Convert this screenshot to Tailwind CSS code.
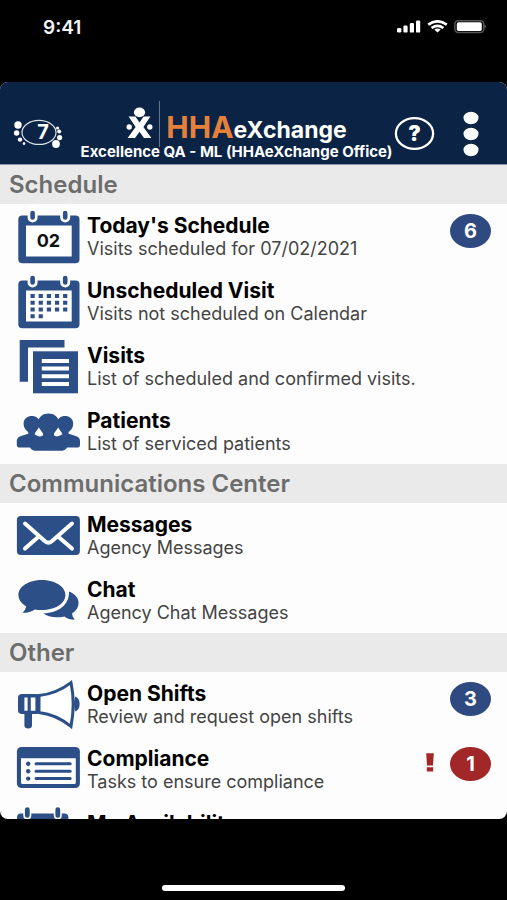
<!DOCTYPE html>
<html lang="en">
<head>
<meta charset="utf-8">
<meta name="viewport" content="width=device-width, initial-scale=1">
<title>HHAeXchange</title>
<script src="https://cdn.jsdelivr.net/npm/@tailwindcss/browser@4"></script>
</head>
<body class="bg-black font-['Inter','Liberation_Sans',sans-serif]">
<div class="flex h-screen flex-col overflow-hidden bg-black">

  <!-- Status bar -->
  <div class="flex h-[82px] shrink-0 items-start justify-between pt-4 pr-5 pl-[43px] text-white">
    <span class="text-[19px] leading-6 font-semibold text-gray-100">9:41</span>
    <svg class="mt-1 h-4 w-[92px]" viewBox="0 0 92 16" aria-label="Signal, Wi-Fi and battery" role="img">
      <g fill="#fff">
        <rect x="2" y="8" width="4.4" height="4.6" rx="1.4"/>
        <rect x="8.4" y="5.6" width="4.2" height="7" rx="1.2"/>
        <rect x="14.8" y="3" width="4.2" height="9.6" rx="1.2"/>
        <rect x="21" y="0.4" width="4.2" height="12.2" rx="1.2"/>
        <path d="M42.5 12.6 L39.3 9.6 Q42.5 7.4 45.7 9.6Z"/>
      </g>
      <g fill="none" stroke="#fff" stroke-width="2.6">
        <path d="M33.2 4.6 Q42.5 -2 51.8 4.6"/>
        <path d="M36.6 8 Q42.5 3.6 48.4 8"/>
      </g>
      <rect x="59.8" y="0.8" width="29" height="11.6" rx="3.4" fill="none" stroke="#555" stroke-width="1.5"/>
      <rect x="61.8" y="2.3" width="25" height="8.8" rx="1.8" fill="#fff"/>
      <path d="M89.8 4.4 Q92 6.4 89.8 8.6Z" fill="#777"/>
    </svg>
  </div>

  <div class="flex min-h-0 flex-1 flex-col overflow-hidden rounded-lg bg-[#fdfdfd]">
    <!-- App header -->
    <header class="flex h-[83px] shrink-0 items-start border-b border-[#8c90b4] bg-[#0b2445] pr-7 pl-3 text-white">
      <button type="button" aria-label="Notifications" class="mt-[35px] shrink-0">
        <svg class="h-8 w-[51px]" viewBox="0 0 51 32">
          <ellipse cx="27" cy="15.4" rx="17" ry="12" fill="none" stroke="#dce2ea" stroke-width="1.2"/>
          <g fill="#fff">
            <circle cx="6" cy="8" r="3.7"/><circle cx="4.6" cy="16" r="2.7"/><circle cx="8" cy="22.6" r="2.2"/><circle cx="12" cy="26.6" r="1.3"/>
            <circle cx="45.6" cy="11" r="1.6"/><circle cx="47.2" cy="14.6" r="2"/><circle cx="47.6" cy="20.6" r="2.6"/><circle cx="44" cy="27" r="3.9"/>
            <text x="31" y="22.4" text-anchor="middle" font-family="Inter" font-size="20" font-weight="700">7</text>
          </g>
        </svg>
      </button>
      <div class="flex min-w-0 flex-1 flex-col items-center pt-[19px] pl-4">
        <div class="flex h-[43px] items-start">
          <svg class="mt-[6px] h-[34px] w-[27px] shrink-0" viewBox="0 0 27 34" aria-hidden="true">
            <g fill="#fff">
              <ellipse cx="13.5" cy="5.4" rx="5.6" ry="4.8"/>
              <path d="M2.6 9.6 H9.4 L13.5 15.6 L17.6 9.6 H24.4 L17.4 20 L25.4 31 H18 L13.5 24.8 L9 31 H1.6 L9.6 20Z"/>
              <circle cx="3.2" cy="20" r="2.7"/><circle cx="23.8" cy="20" r="2.7"/>
            </g>
          </svg>
          <span class="mx-[6px] h-[46px] w-px shrink-0 bg-[#66758c]"></span>
          <span class="mt-2 flex items-baseline leading-9 whitespace-nowrap">
            <span class="text-[30px] font-bold text-[#e5813a]">HHA</span><span class="text-[23px] font-bold">eXchange</span>
          </span>
        </div>
        <h1 class="text-[15px] leading-4 font-bold whitespace-nowrap">Excellence QA - ML (HHAeXchange Office)</h1>
      </div>
      <button type="button" aria-label="Help" class="mt-[34px] shrink-0">
        <svg class="h-[35px] w-[41px]" viewBox="0 0 41 35">
          <ellipse cx="20.5" cy="17.5" rx="18.6" ry="15.4" fill="none" stroke="#fff" stroke-width="2.3"/>
          <text x="20.5" y="25" text-anchor="middle" font-family="Inter" font-size="21" font-weight="900" fill="#fff">?</text>
        </svg>
      </button>
      <button type="button" aria-label="Menu" class="mt-[29px] ml-7 shrink-0">
        <svg class="h-[46px] w-4" viewBox="0 0 16 46" fill="#fff">
          <ellipse cx="8" cy="7" rx="7.5" ry="6.2"/><ellipse cx="8" cy="23" rx="7.5" ry="6.2"/><ellipse cx="8" cy="39" rx="7.5" ry="6.2"/>
        </svg>
      </button>
    </header>

    <main class="min-h-0 flex-1 overflow-hidden">
      <section>
        <h2 class="h-[39px] bg-[#eaeaea] pl-[9px] text-2xl leading-10 font-semibold text-[#6d6d6d]">Schedule</h2>
        <a href="#today" class="flex h-[65px] pr-4 pl-4">
          <svg class="h-[65px] w-16 shrink-0" viewBox="0 0 64 65" aria-hidden="true">
            <rect x="2.3" y="11.5" width="61.2" height="47.7" rx="4" fill="#2c4f87"/>
            <rect x="10" y="21.5" width="45.7" height="31" fill="#fff"/>
            <g stroke-linecap="round"><path d="M16.6 6V13.4M49.2 6V13.4" stroke="#fff" stroke-width="10"/><path d="M16.6 9V13.4M49.2 9V13.4" stroke="#2c4f87" stroke-width="4.6"/></g>
            <text x="32.4" y="43" text-anchor="middle" font-family="Inter" font-size="18" font-weight="700" fill="#111">02</text>
          </svg>
          <span class="ml-[7px] flex-1 pt-[10px] whitespace-nowrap"><span class="block text-[21px] leading-6 font-bold text-black">Today's Schedule</span><span class="block text-lg leading-[22px] text-[#444]">Visits scheduled for 07/02/2021</span></span>
          <span class="mt-[10px] flex h-[34px] w-[41px] items-center justify-center rounded-[50%] bg-[#2f4a80] text-xl font-bold text-white">6</span>
        </a>
        <a href="#unscheduled" class="flex h-[65px] pr-4 pl-4">
          <svg class="h-[65px] w-16 shrink-0" viewBox="0 0 64 65" aria-hidden="true">
            <rect x="2.3" y="11.5" width="61.2" height="47.7" rx="4" fill="#2c4f87"/>
            <rect x="10" y="21.5" width="45.7" height="31" fill="#fff"/>
            <g stroke-linecap="round"><path d="M16.6 6V13.4M49.2 6V13.4" stroke="#fff" stroke-width="10"/><path d="M16.6 9V13.4M49.2 9V13.4" stroke="#2c4f87" stroke-width="4.6"/></g>
            <path d="M14.5 27H51.4M14.5 33.8H51.4M14.5 40.5H51.4" stroke="#2c4f87" stroke-width="4" stroke-dasharray="4.2 3.95"/>
            <path d="M14.5 47.3H27" stroke="#2c4f87" stroke-width="4" stroke-dasharray="4.2 3.95"/>
          </svg>
          <span class="ml-[7px] flex-1 pt-[10px] whitespace-nowrap"><span class="block text-[21px] leading-6 font-bold text-black">Unscheduled Visit</span><span class="block text-lg leading-[22px] text-[#444]">Visits not scheduled on Calendar</span></span>
        </a>
        <a href="#visits" class="flex h-[65px] pr-4 pl-4">
          <svg class="h-[65px] w-16 shrink-0" viewBox="0 0 64 65" aria-hidden="true">
            <path d="M3.7 6H48.5V13.6H12V47.8H3.7Z" fill="#2c4f87"/>
            <rect x="17" y="17.3" width="45" height="42" fill="#2c4f87"/>
            <path d="M25.8 27H53M25.8 34.6H53M25.8 42.2H53M25.8 50H53" stroke="#fff" stroke-width="4"/>
          </svg>
          <span class="ml-[7px] flex-1 pt-[10px] whitespace-nowrap"><span class="block text-[21px] leading-6 font-bold text-black">Visits</span><span class="block text-lg leading-[22px] text-[#444]">List of scheduled and confirmed visits.</span></span>
        </a>
        <a href="#patients" class="flex h-[65px] pr-4 pl-4">
          <svg class="h-[65px] w-16 shrink-0" viewBox="0 0 64 65" aria-hidden="true">
            <g fill="#2c4f87">
              <path d="M7.6 24.5C7.6 14.5 24 14.5 24 24.5C24 29 21.4 31.4 19.4 33.2V36L30 40V48.4H2.6Q0.8 48.4 0.8 46V42Q0.8 38.6 4.4 37.2L12.2 34.8V33C10 31.2 7.6 29 7.6 24.5Z"/>
              <path d="M57.2 24.5C57.2 14.5 40.8 14.5 40.8 24.5C40.8 29 43.4 31.4 45.4 33.2V36L34 40V48.4H62.2Q64 48.4 64 46V42Q64 38.6 60.4 37.2L52.6 34.8V33C54.8 31.2 57.2 29 57.2 24.5Z"/>
              <path d="M22 24.2C22 11.2 43 11.2 43 24.2C43 30 40 32.6 38 34.6V36.6L47.6 40.2Q51 41.6 51 45V48.4Q49.4 51.8 44 51.8H21Q15.6 51.8 14 48.4V45Q14 41.6 17.4 40.2L27 36.6V34.6C25 32.6 22 30 22 24.2Z"/>
            </g>
            <path d="M22.8 28.4L18.4 35.4L27 34.6ZM42.2 28.4L46.6 35.4L38 34.6Z" fill="#fff"/>
          </svg>
          <span class="ml-[7px] flex-1 pt-[10px] whitespace-nowrap"><span class="block text-[21px] leading-6 font-bold text-black">Patients</span><span class="block text-lg leading-[22px] text-[#444]">List of serviced patients</span></span>
        </a>
      </section>

      <section>
        <h2 class="h-[39px] bg-[#eaeaea] pl-[9px] text-2xl leading-10 font-semibold text-[#6d6d6d]">Communications Center</h2>
        <a href="#messages" class="flex h-[65px] pr-4 pl-4">
          <svg class="h-[65px] w-16 shrink-0" viewBox="0 0 64 65" aria-hidden="true">
            <rect x="0.9" y="13" width="63" height="39" rx="4" fill="#2c4f87"/>
            <path d="M9 20.6L29 38.2Q32.4 41 35.8 38.2L56 20.6M9 45.6L22.8 33.4M56 45.6L42 33.4" fill="none" stroke="#fff" stroke-width="4" stroke-linecap="round"/>
          </svg>
          <span class="ml-[7px] flex-1 pt-[10px] whitespace-nowrap"><span class="block text-[21px] leading-6 font-bold text-black">Messages</span><span class="block text-lg leading-[22px] text-[#444]">Agency Messages</span></span>
        </a>
        <a href="#chat" class="flex h-[65px] pr-4 pl-4">
          <svg class="h-[65px] w-16 shrink-0" viewBox="0 0 64 65" aria-hidden="true">
            <path d="M53 23.4C65 28 65.4 39.4 56 45.4Q56.4 49.2 58.8 51.8Q51.4 51 48.4 48.4C40 50.4 31.6 49 27.4 45.2C43 45 53.6 36 53 23.4Z" fill="#2c4f87"/>
            <path d="M25.8 12C39 12 49.4 18.6 49.4 27C49.4 35.6 39 42 25.8 42Q21.8 42 18.8 41.4Q13.6 45 6.6 44.8Q9.4 42 10.2 38.4Q2.4 34 2.4 27C2.4 18.6 12.8 12 25.8 12Z" fill="#2c4f87"/>
          </svg>
          <span class="ml-[7px] flex-1 pt-[10px] whitespace-nowrap"><span class="block text-[21px] leading-6 font-bold text-black">Chat</span><span class="block text-lg leading-[22px] text-[#444]">Agency Chat Messages</span></span>
        </a>
      </section>

      <section>
        <h2 class="h-[39px] bg-[#eaeaea] pl-[9px] text-2xl leading-10 font-semibold text-[#6d6d6d]">Other</h2>
        <a href="#shifts" class="flex h-[65px] pr-4 pl-4">
          <svg class="h-[65px] w-16 shrink-0" viewBox="0 0 64 65" aria-hidden="true">
            <path d="M8.4 40H16V53.2Q16 56.4 12.2 56.4Q8.4 56.4 8.4 53.2Z" fill="#2c4f87"/>
            <rect x="2" y="22" width="22" height="20" rx="4" fill="#2c4f87"/>
            <path d="M8.4 25.4H11.6V38.8H8.4ZM14.8 25.4H19.4V38.8H14.8Z" fill="#fff"/>
            <path d="M23 23.6Q41 21.4 55 10.6Q59.4 32 55 54.4Q41 42.6 23 40.4Z" fill="#fff" stroke="#2c4f87" stroke-width="3"/>
            <path d="M59 24.6Q63.6 26 63.6 32Q63.6 38 59 39.4Q57 32 59 24.6Z" fill="#2c4f87"/>
          </svg>
          <span class="ml-[7px] flex-1 pt-[10px] whitespace-nowrap"><span class="block text-[21px] leading-6 font-bold text-black">Open Shifts</span><span class="block text-lg leading-[22px] text-[#444]">Review and request open shifts</span></span>
          <span class="mt-[10px] flex h-[34px] w-[41px] items-center justify-center rounded-[50%] bg-[#2f4a80] text-xl font-bold text-white">3</span>
        </a>
        <a href="#compliance" class="flex h-[65px] pr-4 pl-4">
          <svg class="h-[65px] w-16 shrink-0" viewBox="0 0 64 65" aria-hidden="true">
            <rect x="0.9" y="10" width="63" height="41" rx="4.6" fill="#2c4f87"/>
            <path d="M5 21.2H59.8V45.4Q59.8 47 58.2 47H6.6Q5 47 5 45.4Z" fill="#fff"/>
            <path d="M20 26.8H54.2M20 34.2H54.2M20 41.6H54.2" stroke="#2c4f87" stroke-width="3" stroke-linecap="round"/>
            <g fill="#2c4f87"><circle cx="12.2" cy="26.8" r="2.2"/><circle cx="12.2" cy="34.2" r="2.2"/><circle cx="12.2" cy="41.6" r="2.2"/></g>
          </svg>
          <span class="ml-[7px] flex-1 pt-[10px] whitespace-nowrap"><span class="block text-[21px] leading-6 font-bold text-black">Compliance</span><span class="block text-lg leading-[22px] text-[#444]">Tasks to ensure compliance</span></span>
          <svg class="mt-4 mr-4 h-5 w-2" viewBox="0 0 8 20" role="img" aria-label="Attention needed"><path d="M0.2 0.2H7.8L7 12.4H1ZM0.8 14.2H7.2V18.4H0.8Z" fill="#a12728"/></svg>
          <span class="mt-[10px] flex h-[34px] w-[41px] items-center justify-center rounded-[50%] bg-[#a12728] text-xl font-bold text-white">1</span>
        </a>
        <a href="#availability" class="flex h-[65px] pr-4 pl-4">
          <svg class="h-[65px] w-16 shrink-0" viewBox="0 0 64 65" aria-hidden="true">
            <rect x="1" y="11.5" width="51.4" height="47.7" rx="4" fill="#2c4f87"/>
            <g stroke-linecap="round"><path d="M11.3 7V13.4M41.8 7V13.4" stroke="#fff" stroke-width="8"/><path d="M11.3 7.6V13.4M41.8 7.6V13.4" stroke="#2c4f87" stroke-width="4.8"/></g>
          </svg>
          <span class="ml-[7px] flex-1 pt-[10px] whitespace-nowrap"><span class="block text-[21px] leading-6 font-bold text-black">My Availability</span></span>
        </a>
      </section>
    </main>
  </div>

  <!-- Home indicator -->
  <div class="flex h-[81px] shrink-0 items-end justify-center pb-[9px]">
    <span class="h-[6px] w-[36%] rounded-full bg-white"></span>
  </div>
</div>
</body>
</html>
